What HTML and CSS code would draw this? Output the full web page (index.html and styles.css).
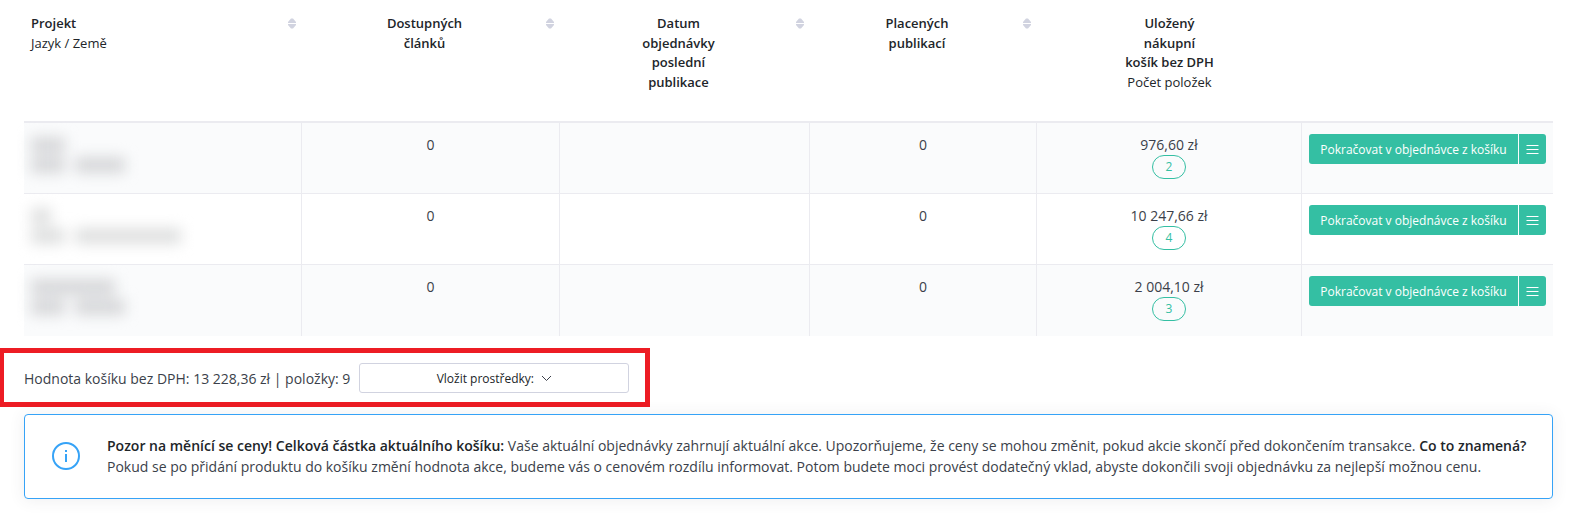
FILE: index.html
```html
<!DOCTYPE html>
<html lang="cs">
<head>
    <meta charset="UTF-8">
    <meta name="viewport" content="width=device-width, initial-scale=1.0">
    <title>Projekty</title>
    <link rel="stylesheet" href="styles.css">
</head>
<body>

<svg class="symbols" aria-hidden="true">
    <symbol id="sort" viewBox="0 0 8 11">
        <path d="M0 5V4L3 0.500H5L8 4V5ZM0 6V7L3 10.500H5L8 7V6Z"/>
    </symbol>
    <symbol id="menu" viewBox="0 0 13 11">
        <path d="M0.500 1.500H12.500M0.500 5.500H12.500M0.500 9.500H12.500"/>
    </symbol>
</svg>

<!-- Projects -->
<div class="table-wrap">
    <table class="projects">
        <colgroup>
            <col>
            <col class="col-articles">
            <col class="col-date">
            <col class="col-paid">
            <col class="col-cart">
            <col class="col-actions">
        </colgroup>
        <thead>
            <tr>
                <th class="sortable name">Projekt<br><span class="sub">Jazyk / Země</span><svg class="sort"><use href="#sort"/></svg></th>
                <th class="sortable">Dostupných<br>článků<svg class="sort"><use href="#sort"/></svg></th>
                <th class="sortable">Datum<br>objednávky<br>poslední<br>publikace<svg class="sort"><use href="#sort"/></svg></th>
                <th class="sortable">Placených<br>publikací<svg class="sort"><use href="#sort"/></svg></th>
                <th>Uložený<br>nákupní<br>košík bez DPH<br><span class="sub">Počet položek</span></th>
                <th></th>
            </tr>
        </thead>
        <tbody>
            <tr>
                <td class="name"><div class="hidden-name"><i class="w-short"></i><div class="line"><i class="w-short"></i><i class="w-mid"></i></div></div></td>
                <td>0</td>
                <td></td>
                <td>0</td>
                <td>976,60 zł<a class="badge" href="#">2</a></td>
                <td>
                    <div class="actions">
                        <button type="button" class="btn main">Pokračovat v objednávce z košíku</button>
                        <button type="button" class="btn more" aria-label="Menu"><svg><use href="#menu"/></svg></button>
                    </div>
                </td>
            </tr>
            <tr>
                <td class="name"><div class="hidden-name light"><i class="w-tiny"></i><div class="line"><i class="w-short"></i><i class="w-long"></i></div></div></td>
                <td>0</td>
                <td></td>
                <td>0</td>
                <td>10 247,66 zł<a class="badge" href="#">4</a></td>
                <td>
                    <div class="actions">
                        <button type="button" class="btn main">Pokračovat v objednávce z košíku</button>
                        <button type="button" class="btn more" aria-label="Menu"><svg><use href="#menu"/></svg></button>
                    </div>
                </td>
            </tr>
            <tr>
                <td class="name"><div class="hidden-name"><i class="w-wide"></i><div class="line"><i class="w-short"></i><i class="w-mid"></i></div></div></td>
                <td>0</td>
                <td></td>
                <td>0</td>
                <td>2 004,10 zł<a class="badge" href="#">3</a></td>
                <td>
                    <div class="actions">
                        <button type="button" class="btn main">Pokračovat v objednávce z košíku</button>
                        <button type="button" class="btn more" aria-label="Menu"><svg><use href="#menu"/></svg></button>
                    </div>
                </td>
            </tr>
        </tbody>
    </table>
</div>

<!-- Cart value -->
<div class="summary">
    <span>Hodnota košíku bez DPH: 13 228,36 zł | položky: 9</span>
    <button type="button" class="deposit">Vložit prostředky:
        <svg viewBox="0 0 11 7"><path d="M1 1L5.500 5.500L10 1"/></svg>
    </button>
</div>

<!-- Price notice -->
<div class="notice">
    <svg class="info" viewBox="0 0 28 28">
        <circle cx="14" cy="14" r="13"/>
        <path d="M14 12V20M14 8V10"/>
    </svg>
    <p><strong>Pozor na měnící se ceny! Celková částka aktuálního košíku:</strong> Vaše aktuální objednávky zahrnují aktuální akce. Upozorňujeme, že ceny se mohou změnit, pokud akcie skončí před dokončením transakce. <strong>Co to znamená?</strong><br>
    Pokud se po přidání produktu do košíku změní hodnota akce, budeme vás o cenovém rozdílu informovat. Potom budete moci provést dodatečný vklad, abyste dokončili svoji objednávku za nejlepší možnou cenu.</p>
</div>

</body>
</html>
```

FILE: styles.css
```css
* {
    box-sizing: border-box;
}
body {
    margin: 0;
    font-family: "Open Sans", "Noto Sans", sans-serif;
    font-size: 14px;
    line-height: 1.5;
    color: #3b3f4a;
    background-color: #fff;
}
button {
    font-family: inherit;
    font-size: 12px;
    cursor: pointer;
}
.symbols {
    display: none;
}

/* Table */
.table-wrap {
    padding: 0 19px 0 24px;
}
.projects {
    width: 100%;
    table-layout: fixed;
    border-collapse: separate;
    border-spacing: 0;
}
.col-articles {
    width: 258px;
}
.col-date {
    width: 250px;
}
.col-paid {
    width: 227px;
}
.col-cart {
    width: 265px;
}
.col-actions {
    width: 251px;
}
th {
    position: relative;
    height: 123px;
    padding: 14px 7px;
    vertical-align: top;
    font-size: 13px;
    font-weight: 600;
    color: #212529;
    border-bottom: 2px solid #ebebf0;
}
th.sortable {
    padding-right: 20px;
}
th.name,
td.name {
    text-align: left;
}
.sub {
    font-weight: 400;
}
.sort {
    position: absolute;
    top: 18px;
    right: 6px;
    width: 8px;
    height: 11px;
    fill: #d1d3e0;
}
td {
    height: 71px;
    padding: 11px 7px;
    vertical-align: top;
    text-align: center;
    border-right: 1px solid #ebebf0;
    border-bottom: 1px solid #ebebf0;
}
td:last-child {
    border-right: 0;
}
tbody tr:last-child td {
    border-bottom: 0;
}
tbody tr:nth-child(odd) {
    background-color: #fafbfc;
}
.badge {
    display: block;
    width: 34px;
    height: 24px;
    margin: 0 auto;
    border: 1px solid #34bfa3;
    border-radius: 12px;
    font-size: 12px;
    line-height: 22px;
    color: #34bfa3;
    text-decoration: none;
}

/* Hidden project names */
.hidden-name {
    display: flex;
    flex-direction: column;
    gap: 4px;
    padding-top: 3px;
    filter: blur(7px);
}
.hidden-name .line {
    display: flex;
    gap: 10px;
}
.hidden-name i {
    height: 16px;
    background-color: #d6d7d9;
}
.hidden-name.light i {
    background-color: #dfe0e0;
}
.hidden-name .w-tiny {
    width: 20px;
}
.hidden-name .w-short {
    width: 34px;
}
.hidden-name .w-mid {
    width: 50px;
}
.hidden-name .w-wide {
    width: 84px;
}
.hidden-name .w-long {
    width: 106px;
}

/* Buttons */
.actions {
    display: flex;
    gap: 1px;
}
.btn {
    height: 30px;
    padding: 0;
    border: 0;
    color: #fff;
    background-color: #34bfa3;
}
.main {
    flex: 1;
    white-space: nowrap;
    border-radius: 3px 0 0 3px;
}
.more {
    display: flex;
    align-items: center;
    justify-content: center;
    width: 27px;
    border-radius: 0 3px 3px 0;
}
.more svg {
    width: 13px;
    height: 11px;
    fill: none;
    stroke: #fff;
}

/* Cart value */
.summary {
    display: flex;
    align-items: center;
    gap: 9px;
    width: fit-content;
    margin-top: 12px;
    padding: 10px 16px 9px 20px;
    border: 5px solid #ed1c24;
    border-left-width: 4px;
}
.deposit {
    display: flex;
    align-items: center;
    justify-content: center;
    gap: 7px;
    width: 270px;
    height: 30px;
    border: 1px solid #d1d3e0;
    border-radius: 3px;
    color: #212529;
    background-color: #fff;
}
.deposit svg {
    width: 11px;
    height: 7px;
    fill: none;
    stroke: #3b3f4a;
}

/* Notice */
.notice {
    display: flex;
    align-items: center;
    gap: 27px;
    margin: 7px 19px 30px 24px;
    padding: 20px 16px 21px 27px;
    border: 1px solid #36a3f7;
    border-radius: 4px;
    box-shadow: 0 1px 15px 1px rgba(69, 65, 78, 0.08);
}
.notice p {
    margin: 0;
}
.notice strong {
    font-weight: 600;
    color: #212529;
}
.info {
    flex: none;
    width: 28px;
    height: 28px;
    fill: none;
    stroke: #36a3f7;
    stroke-width: 2;
}
```
